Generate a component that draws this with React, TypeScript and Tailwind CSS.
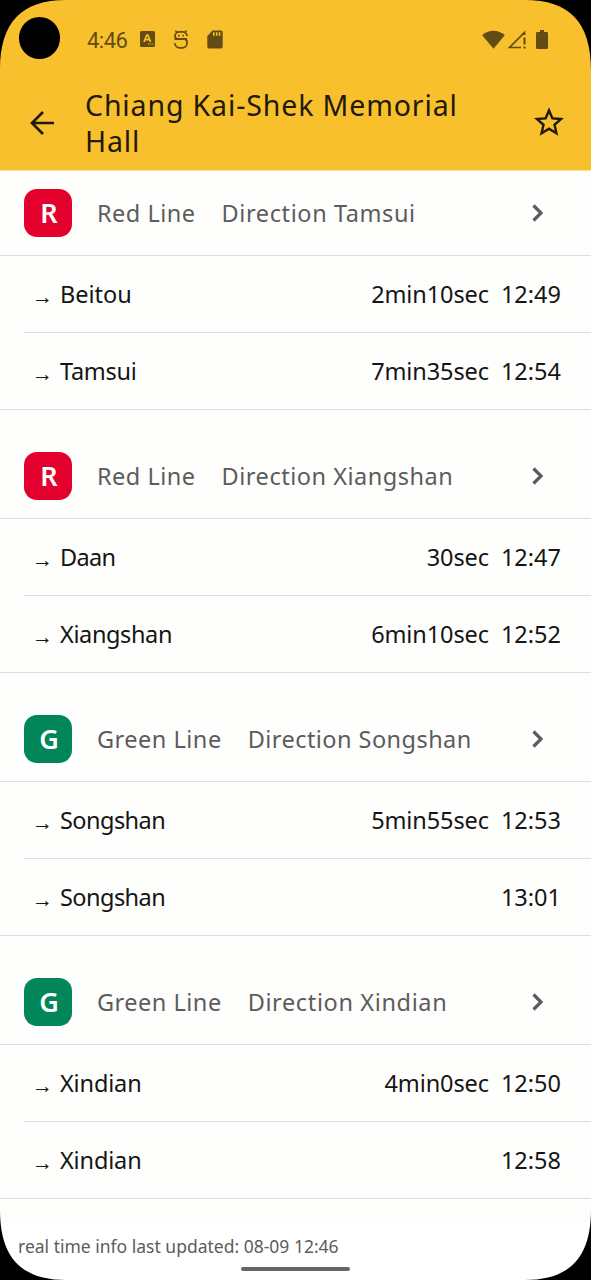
import type { ReactNode } from "react";

interface Arrival {
  destination: string;
  spacing: string;
  countdown?: string;
  time: string;
}

interface Platform {
  code: string;
  line: string;
  direction: string;
  directionSpacing: string;
  arrivals: Arrival[];
}

const platforms: Platform[] = [
  {
    code: "R",
    line: "Red Line",
    direction: "Direction Tamsui",
    directionSpacing: "tracking-[0.6px]",
    arrivals: [
      { destination: "Beitou", spacing: "tracking-[0px]", countdown: "2min10sec", time: "12:49" },
      { destination: "Tamsui", spacing: "tracking-[-0.25px]", countdown: "7min35sec", time: "12:54" },
    ],
  },
  {
    code: "R",
    line: "Red Line",
    direction: "Direction Xiangshan",
    directionSpacing: "tracking-[0.52px]",
    arrivals: [
      { destination: "Daan", spacing: "tracking-[-0.7px]", countdown: "30sec", time: "12:47" },
      { destination: "Xiangshan", spacing: "tracking-[-0.38px]", countdown: "6min10sec", time: "12:52" },
    ],
  },
  {
    code: "G",
    line: "Green Line",
    direction: "Direction Songshan",
    directionSpacing: "tracking-[0.45px]",
    arrivals: [
      { destination: "Songshan", spacing: "tracking-[-0.55px]", countdown: "5min55sec", time: "12:53" },
      { destination: "Songshan", spacing: "tracking-[-0.55px]", time: "13:01" },
    ],
  },
  {
    code: "G",
    line: "Green Line",
    direction: "Direction Xindian",
    directionSpacing: "tracking-[0.63px]",
    arrivals: [
      { destination: "Xindian", spacing: "tracking-[-0.15px]", countdown: "4min0sec", time: "12:50" },
      { destination: "Xindian", spacing: "tracking-[-0.15px]", time: "12:58" },
    ],
  },
];

const badgeColors: Record<string, string> = {
  R: "bg-[#e3002c]",
  G: "bg-[#008659]",
};

const StatusBar = () => (
  <div className="flex h-[78px] items-center pl-[87px] pr-[42px] text-[#634c13]">
    <span className="w-[41px] whitespace-nowrap pt-[3px] font-['Roboto',sans-serif] text-[22px] leading-none tracking-[-0.5px]">
      4:46
    </span>
    {/* Input method */}
    <svg className="ml-3 h-4 w-[15px]" viewBox="0 0 15 16">
      <rect width="15" height="16" rx="1.5" fill="currentColor" />
      <path d="M4 11 6.8 4h1L10.6 11M5 8.6h4.6" fill="none" stroke="#f9c02e" strokeWidth="1.7" />
      <path d="M8 13h1.2M10.2 13h1.2M12.4 13h1.2" stroke="#f9c02e" strokeWidth="1.1" />
    </svg>
    {/* Debug bridge */}
    <svg className="ml-[19px] h-[19px] w-[14px]" viewBox="0 0 14 19" fill="none" stroke="currentColor">
      <path d="M1.5.5 3 2.8M12.5.5 11 2.8" strokeWidth="1.5" />
      <path d="M13 8.8H4A3 3 0 0 1 1 6a4.4 4.4 0 0 1 4.4-4.1h3.2A4.4 4.4 0 0 1 13 6" strokeWidth="1.8" />
      <path d="M.5 9H10a3 3 0 0 1 3 3v1.3a4.5 4.5 0 0 1-4.5 4.5H5.5A4.5 4.5 0 0 1 1 13.3" strokeWidth="1.8" />
      <path d="M4 5.6h1.6M8.4 5.6H10" strokeWidth="1.6" />
    </svg>
    {/* Memory card */}
    <svg className="ml-[19px] h-[19px] w-4" viewBox="0 0 16 19">
      <path d="M5.5.5H14a1.7 1.7 0 0 1 1.7 1.7v14.6A1.7 1.7 0 0 1 14 18.5H2A1.7 1.7 0 0 1 .3 16.8V6z" fill="currentColor" />
      <path d="M6.8 2.2v3.5M9.7 2.2v3.5M12.6 2.2v3.5" stroke="#f9c02e" strokeWidth="1.6" />
    </svg>
    <div className="ml-auto flex items-center">
      <svg className="h-[19px] w-[23px]" viewBox="0 0 23 19">
        <path d="M.2 5.2C6.5-.9 16.5-.9 22.8 5.2L11.5 18.8z" fill="currentColor" />
      </svg>
      <svg className="ml-0.5 h-[19px] w-[19px]" viewBox="0 0 19 19" fill="none" stroke="currentColor">
        <path d="M14 17.5H2.5L17.5 2.5" strokeWidth="1.7" />
        <path d="M18.4.5v4.5h-4.5z" fill="currentColor" stroke="none" />
        <path d="M17.5 7.5v7M17.5 16.5v2" strokeWidth="2" />
      </svg>
      <svg className="ml-2.5 mr-px h-[19px] w-3" viewBox="0 0 12 19">
        <path d="M4 0h4v2h2.8A1.2 1.2 0 0 1 12 3.2v14.6A1.2 1.2 0 0 1 10.8 19H1.2A1.2 1.2 0 0 1 0 17.8V3.2A1.2 1.2 0 0 1 1.2 2H4z" fill="currentColor" />
      </svg>
    </div>
  </div>
);

const TopBar = () => (
  <div className="flex h-[89px] items-center pl-[30px] pr-[27px] text-[#211a0a]">
    <svg className="h-6 w-6" viewBox="0 0 24 24" fill="none" stroke="currentColor" strokeWidth="2.7">
      <path d="M24 12H2M13 1 2 12l11 11" />
    </svg>
    <h1 className="ml-[31px] flex-1 text-[28.5px] leading-9">
      <span className="block whitespace-nowrap tracking-[0.87px]">Chiang Kai-Shek Memorial</span>
      <span className="block tracking-[0.87px]">Hall</span>
    </h1>
    <svg className="mb-[2px] h-[29px] w-[30px]" viewBox="2 2 20 19" fill="currentColor">
      <path d="m22 9.24-7.19-.62L12 2 9.19 8.63 2 9.24l5.46 4.73L5.82 21 12 17.27 18.18 21l-1.63-7.03zM12 15.4l-3.76 2.27 1-4.28-3.32-2.88 4.38-.38L12 6.1l1.71 4.04 4.38.38-3.32 2.88 1 4.28z" />
    </svg>
  </div>
);

const PlatformHeader = ({ platform }: { platform: Platform }) => (
  <div className="flex h-[85px] items-center border-b border-[#dfdfdf] pl-6 pr-[47px] text-[23.5px] text-[#5c5c5c]">
    <div
      className={`flex size-12 items-center justify-center rounded-[13px] pb-0.5 pl-0.5 text-[27px] font-semibold leading-none text-white ${badgeColors[platform.code]}`}
    >
      {platform.code}
    </div>
    <span className="ml-[25px] whitespace-nowrap pt-0.5 tracking-[0.5px]">{platform.line}</span>
    <span className={`ml-[26px] whitespace-nowrap pt-0.5 ${platform.directionSpacing}`}>{platform.direction}</span>
    <svg className="ml-auto h-[18px] w-3" viewBox="0 0 12 18" fill="none" stroke="currentColor" strokeWidth="3.2">
      <path d="m1.5 1.5 7.5 7.5-7.5 7.5" />
    </svg>
  </div>
);

const ArrivalRow = ({ arrival, last }: { arrival: Arrival; last: boolean }) => (
  <div className={last ? "border-b border-[#dfdfdf]" : "ml-6 border-b border-[#dfdfdf]"}>
    <div
      className={`flex h-[76px] items-center whitespace-nowrap pr-[30px] pt-0.5 text-[23.5px] text-[#151515] ${last ? "pl-8" : "pl-2"}`}
    >
      <span className="w-7 pt-1 font-['Liberation_Serif',serif] text-[21px] leading-none">→</span>
      <span className={arrival.spacing}>{arrival.destination}</span>
      <span className="ml-auto tracking-[-0.1px]">{arrival.countdown}</span>
      <span className="ml-3">{arrival.time}</span>
    </div>
  </div>
);

const ScreenCorners = () => {
  const corner: ReactNode = <path d="M0 0H66C22 0 0 22 0 70z" />;
  return (
    <>
      <svg className="absolute left-0 top-0 size-[70px]" viewBox="0 0 70 70">{corner}</svg>
      <svg className="absolute right-0 top-0 size-[70px] -scale-x-100" viewBox="0 0 70 70">{corner}</svg>
      <svg className="absolute bottom-0 left-0 size-[70px] -scale-y-100" viewBox="0 0 70 70">{corner}</svg>
      <svg className="absolute bottom-0 right-0 size-[70px] rotate-180" viewBox="0 0 70 70">{corner}</svg>
    </>
  );
};

const App = () => (
  <div className="relative flex h-[1280px] w-[591px] flex-col overflow-hidden bg-[#fefefc] font-['Noto_Sans',sans-serif]">
    <header className="h-[171px] shrink-0 border-b border-[#fce3a0] bg-[#f9c02e]">
      <StatusBar />
      <TopBar />
    </header>
    <main className="flex flex-1 flex-col gap-6">
      {platforms.map((platform) => (
        <section key={platform.direction}>
          <PlatformHeader platform={platform} />
          {platform.arrivals.map((arrival, i) => (
            <ArrivalRow key={arrival.time} arrival={arrival} last={i === platform.arrivals.length - 1} />
          ))}
        </section>
      ))}
    </main>
    <footer className="h-[58px] shrink-0 bg-white pl-[18px] pt-3 text-[17.5px] leading-6 text-[#5c5c5c]">
      <span className="whitespace-nowrap">real time info last updated: 08-09 12:46</span>
    </footer>

    {/* Camera cutout and gesture handle */}
    <div className="absolute left-[19px] top-[17px] h-[42px] w-[41px] rounded-full bg-black" />
    <div className="absolute bottom-[9px] left-[241px] h-1 w-[109px] rounded-full bg-[#666666]" />
    <ScreenCorners />
  </div>
);

export default App;
